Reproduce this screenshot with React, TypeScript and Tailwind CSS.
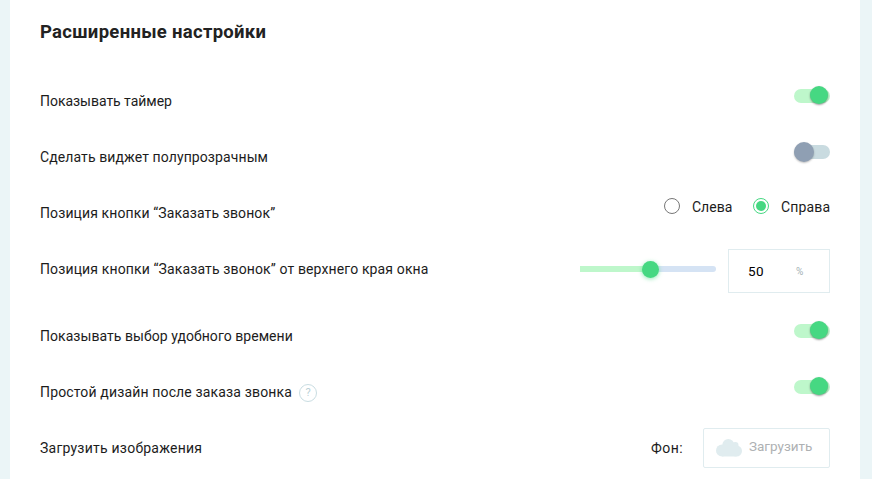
import type { ReactNode } from "react";

function Toggle({ on }: { on: boolean }) {
  return (
    <div className={`relative mb-[10px] h-[14px] w-9 rounded-full ${on ? "bg-[#bef7cb]" : "bg-[#c9dbe0]"}`}>
      <span
        className={`absolute -top-[3px] rounded-full ${
          on
            ? "left-4 size-[18px] bg-[#46d882] shadow-[0_1px_2px_rgba(0,0,0,0.4)]"
            : "left-0 size-5 bg-[#8f9fb3] shadow-[0_1px_2px_rgba(0,0,0,0.25)]"
        }`}
      />
    </div>
  );
}

function Radio({ label, checked, tracking }: { label: string; checked?: boolean; tracking: string }) {
  return (
    <label className="flex items-center">
      <span
        className={`mb-[3px] flex size-4 items-center justify-center rounded-full border ${
          checked ? "border-[#46d882]" : "border-[#777777]"
        }`}
      >
        {checked && <span className="size-[10px] rounded-full bg-[#46d882]" />}
      </span>
      <span className={`ml-3 ${tracking}`}>{label}</span>
    </label>
  );
}

function Row({ label, tracking, hint, className = "h-14", children }: {
  label: string;
  tracking: string;
  hint?: ReactNode;
  className?: string;
  children: ReactNode;
}) {
  return (
    <div className={`flex items-center justify-between ${className}`}>
      <div className="flex items-center">
        <span className={`whitespace-nowrap ${tracking}`}>{label}</span>
        {hint}
      </div>
      <div className="flex items-center">{children}</div>
    </div>
  );
}

export default function App() {
  return (
    <div className="h-[479px] w-[872px] overflow-hidden bg-[#ebf5f7] pr-3 pl-[10px] font-['Roboto','Liberation_Sans',sans-serif] text-sm leading-5 text-[#1c1c1c]">
      <main className="h-full bg-white px-[30px] pt-5">
        <h2 className="mb-[29px] h-6 text-[18.5px] leading-6 font-bold tracking-[0.3px] whitespace-nowrap text-[#222222]">
          Расширенные настройки
        </h2>
        <Row label="Показывать таймер" tracking="tracking-[-0.03px]">
          <Toggle on />
        </Row>
        <Row label="Сделать виджет полупрозрачным" tracking="tracking-[0.1px]">
          <Toggle on={false} />
        </Row>
        <Row label="Позиция кнопки “Заказать звонок”" tracking="tracking-[0.11px]">
          <div className="mb-3 flex">
            <Radio label="Слева" tracking="w-[61px] tracking-normal" />
            <Radio label="Справа" checked tracking="w-[49px] tracking-[0.15px]" />
          </div>
        </Row>
        <Row
          label="Позиция кнопки “Заказать звонок” от верхнего края окна"
          tracking="tracking-[0.13px]"
          className="mb-[11px] h-14"
        >
          <div className="relative mr-3 h-[6px] w-[136px] rounded-r-full bg-[#d5e3f4]">
            <div className="h-full w-[70px] bg-[#bef7cb]" />
            <span className="absolute -top-[5px] left-[62px] size-[17px] rounded-full bg-[#46d882] shadow-[0_1px_4px_rgba(70,216,130,0.6)]" />
          </div>
          <div className="mt-1 flex h-11 w-[102px] items-center border border-[#e0ecef] pl-[19px]">
            <span className="w-[48px] text-[13.5px] tracking-[0.4px] text-black">50</span>
            <span className="pt-0.5 text-[10px] text-[#a5b1b5]">%</span>
          </div>
        </Row>
        <Row label="Показывать выбор удобного времени" tracking="tracking-[0.05px]">
          <Toggle on />
        </Row>
        <Row
          label="Простой дизайн после заказа звонка"
          tracking="w-[252px] tracking-[0.15px]"
          hint={
            <span className="mt-0.5 ml-[7px] flex size-[18px] items-center justify-center rounded-full border border-[#c9dde2] text-[11px] text-[#b9d0d6]">
              ?
            </span>
          }
        >
          <Toggle on />
        </Row>
        <Row label="Загрузить изображения" tracking="tracking-[0.23px]">
          <span className="mr-5 w-8 tracking-[0.45px]">Фон:</span>
          <button className="flex h-10 w-[127px] items-center rounded-[2px] border border-[#e0ecef] pl-3 text-[#aeb1b3]">
            <svg className="h-[18px] w-[26px]" viewBox="0 0 26 18" fill="#e0ecef">
              <circle cx="12.3" cy="6" r="6" />
              <circle cx="19.3" cy="6.2" r="3.2" />
              <circle cx="6" cy="11.5" r="6" />
              <circle cx="20.5" cy="12" r="5.5" />
              <path d="M6 8h14.5v9.5H6z" />
            </svg>
            <span className="mb-[5px] ml-[7px] text-[13.5px]">Загрузить</span>
          </button>
        </Row>
      </main>
    </div>
  );
}
